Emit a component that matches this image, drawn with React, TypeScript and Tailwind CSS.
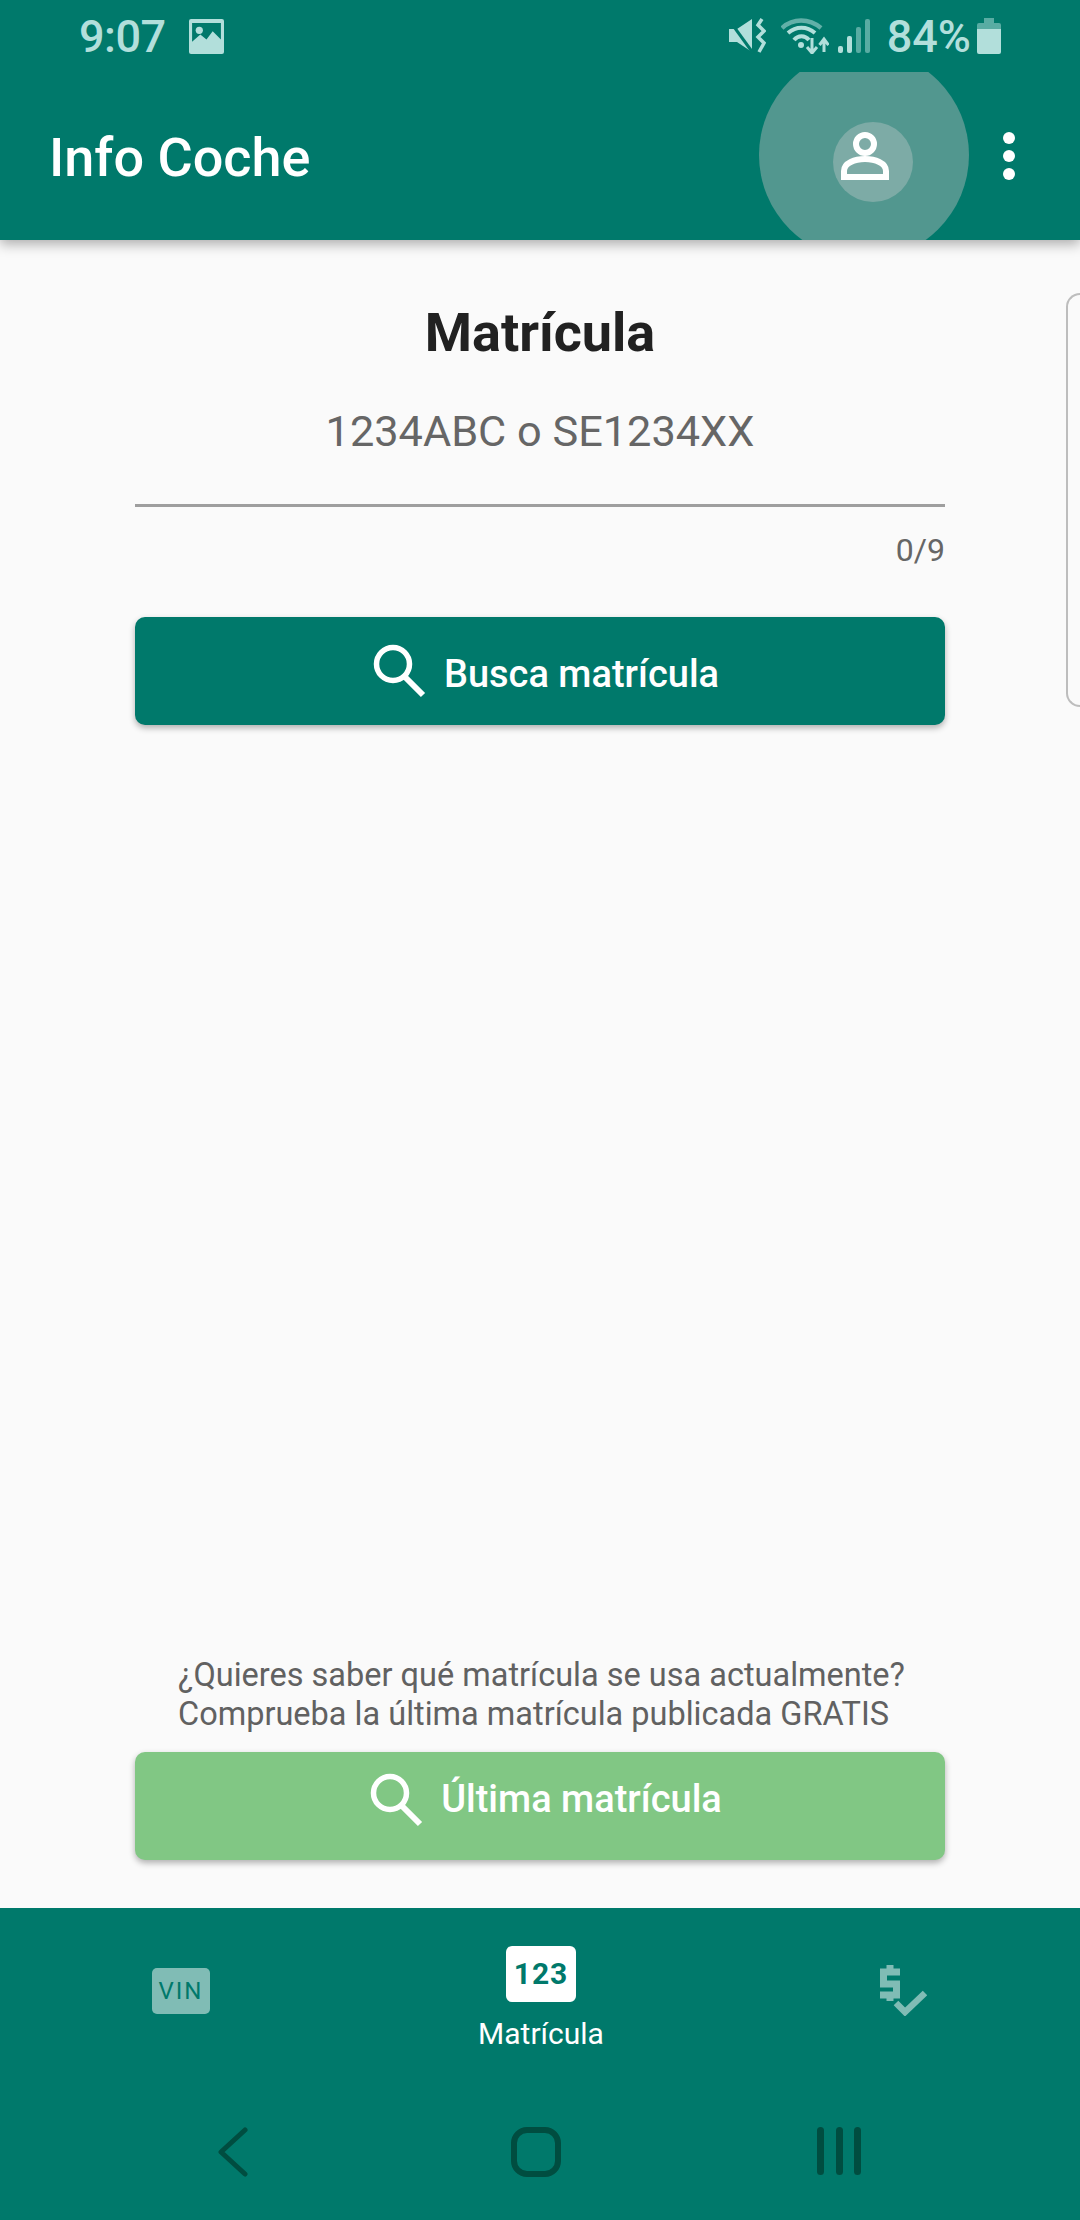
const roboto = "font-['Roboto',sans-serif]";

function SearchIcon() {
  return (
    <svg width="54" height="54" viewBox="0 0 54 54" fill="none" stroke="currentColor" className="shrink-0">
      <circle cx="20" cy="20" r="16.5" strokeWidth="5.5" />
      <path d="M31 32 L50 51" strokeWidth="6" />
    </svg>
  );
}

function ActionButton({ label, color, pad, labelPad }: { label: string; color: string; pad: string; labelPad: string }) {
  return (
    <button className={`flex h-[108px] w-full items-center justify-center gap-[17px] rounded-[10px] pl-[12px] text-[38px] font-medium text-white shadow-[0_3px_6px_rgba(0,0,0,0.3)] ${color} ${pad}`}>
      <SearchIcon />
      <span className={labelPad}>{label}</span>
    </button>
  );
}

function StatusBar() {
  return (
    <div className="flex h-[72px] items-center justify-between pl-[79px] pr-[79px] text-[#b2dfdb]">
      <div className="flex items-center gap-[23px]">
        <span className="text-[45px] font-medium leading-none tracking-[-0.5px]">9:07</span>
        <svg width="35" height="35" viewBox="0 0 34 34">
          <path fillRule="evenodd" fill="currentColor" d="M2 0h30a2 2 0 0 1 2 2v30a2 2 0 0 1-2 2H2a2 2 0 0 1-2-2V2a2 2 0 0 1 2-2Zm1 4v18l8-7 6 5 6-8 8 8V4H3Z" />
          <circle cx="10" cy="11" r="3.5" fill="currentColor" />
        </svg>
      </div>
      <div className="flex items-center">
        <svg width="37" height="36" viewBox="0 0 37 36" fill="currentColor">
          <path d="M0 11h8L23 1v33L8 24H0Z" />
          <path d="M0 2 L24 35" stroke="#00796b" strokeWidth="3" />
          <path d="M33 1 L29 7 L35 13 L29 19 L35 25 L30 34" fill="none" stroke="currentColor" strokeWidth="3.5" />
        </svg>
        <svg width="48" height="36" viewBox="0 0 48 36" fill="none" stroke="currentColor" className="ml-[15px]">
          <path d="M1 10 C12 0 28 0 40 10" strokeWidth="4.500" opacity="0.55" />
          <path d="M7 15 C15 8 26 8 34 15" strokeWidth="4" />
          <path d="M13 22 C17 17 24 17 28 22" strokeWidth="4" />
          <circle cx="20" cy="27" r="3" fill="currentColor" stroke="none" />
          <path d="M31 20 V34 M26 29 L31 35 L36 29 M43 34 V22 M38.500 27 L43 21 L47.500 27" strokeWidth="3" />
        </svg>
        <svg width="32" height="36" viewBox="0 0 32 36" className="ml-[9px]" fill="currentColor">
          <rect x="0" y="28" width="5" height="7" rx="2" />
          <rect x="9" y="18" width="5" height="17" rx="2" />
          <rect x="18" y="9" width="5" height="26" rx="2" opacity="0.5" />
          <rect x="27" y="1" width="5" height="34" rx="2" opacity="0.5" />
        </svg>
        <span className="ml-[17px] text-[45px] font-medium leading-none">84%</span>
        <svg width="24" height="36" viewBox="0 0 24 36" className="ml-[6px]" fill="currentColor">
          <path d="M7 0h10v5h5a2 2 0 0 1 2 2v4H0V7a2 2 0 0 1 2-2h5Z" opacity="0.5" />
          <path d="M0 11h24v23a2 2 0 0 1-2 2H2a2 2 0 0 1-2-2Z" />
        </svg>
      </div>
    </div>
  );
}

function Toolbar() {
  return (
    <div className="relative flex h-[168px] items-center justify-between overflow-hidden pl-[49px] pr-[65px]">
      {/* touch ripple behind the account button */}
      <div className="absolute left-[759px] top-[-22px] h-[210px] w-[210px] rounded-full bg-[#52978f]" />
      <div className="absolute left-[833px] top-[50px] h-[80px] w-[80px] rounded-full bg-[#7dabA6]" />
      <span className="pt-[3px] text-[54px] font-medium leading-none text-white">Info Coche</span>
      <div className="relative flex items-center gap-[114px]">
        <svg width="48" height="48" viewBox="0 0 48 48" fill="none" stroke="white" strokeWidth="6">
          <circle cx="24" cy="12" r="9" />
          <path d="M3 45 V39 C3 31 14 27 24 27 C34 27 45 31 45 39 V45 Z" />
        </svg>
        <svg width="12" height="48" viewBox="0 0 12 48" fill="white">
          <circle cx="6" cy="6" r="6" />
          <circle cx="6" cy="24" r="6" />
          <circle cx="6" cy="42" r="6" />
        </svg>
      </div>
    </div>
  );
}

function BottomNav() {
  return (
    <div className="flex h-[312px] flex-col bg-[#00796b]">
      <div className="flex h-[176px] items-start justify-between pl-[152px] pr-[153px]">
        <div className="mt-[60px] flex h-[46px] w-[58px] items-center justify-center rounded-[5px] bg-[#80bcb5] text-[24px] leading-none tracking-[2px] text-[#00796b]">
          VIN
        </div>
        <div className="mr-[8px] mt-[38px] flex flex-col items-center">
          <div className="flex h-[56px] w-[70px] items-center justify-center rounded-[6px] bg-white text-[30px] font-bold leading-none tracking-[1px] text-[#00796b]">
            123
          </div>
          <span className="mt-[15px] text-[30px] leading-[34px] text-white">Matrícula</span>
        </div>
        <svg width="47" height="52" viewBox="0 0 47 52" className="mt-[56px]" fill="none" stroke="#80bcb5">
          <path d="M20 8 H3.500 V20 H16.500 V31 H0" strokeWidth="7" />
          <path d="M10 1 V6 M10 33 V37" strokeWidth="7" />
          <path d="M16 39 L25 48 L45 29" strokeWidth="6.500" />
        </svg>
      </div>
      <div className="flex flex-1 items-start justify-between pl-[218px] pr-[219px] pt-[43px]">
        <svg width="30" height="50" viewBox="0 0 30 50" fill="none" stroke="#004d40" strokeWidth="5" strokeLinecap="round" strokeLinejoin="round">
          <path d="M27 3 L3 25 L27 47" />
        </svg>
        <div className="ml-[6px] h-[50px] w-[50px] rounded-[16px] border-[6px] border-[#004d40]" />
        <div className="flex h-[48px] w-[44px] justify-between">
          <div className="h-full w-[7px] rounded-full bg-[#004d40]" />
          <div className="h-full w-[7px] rounded-full bg-[#004d40]" />
          <div className="h-full w-[7px] rounded-full bg-[#004d40]" />
        </div>
      </div>
    </div>
  );
}

export default function App() {
  return (
    <div className={`flex h-[2220px] w-[1080px] flex-col overflow-hidden bg-[#fafafa] ${roboto}`}>
      <div className="relative z-10 bg-[#00796b] shadow-[0_4px_12px_rgba(0,0,0,0.32)]">
        <StatusBar />
        <Toolbar />
      </div>

      <div className="relative flex flex-1 flex-col px-[135px]">
        {/* edge panel handle */}
        <div className="absolute right-0 top-[53px] h-[414px] w-[14px] rounded-l-[14px] border-y-2 border-l-2 border-[#bdbdbd]" />

        <h1 className="mt-[60px] text-center text-[54px] font-bold leading-[66px] text-[#212121]">Matrícula</h1>
        <div className="mt-[41px] text-center text-[43.300px] leading-[50px] text-[#666666]">1234ABC o SE1234XX</div>
        <div className="mt-[47px] h-[3px] bg-[#9e9e9e]" />
        <div className="mt-[24px] text-right text-[32px] leading-[38px] text-[#666666]">0/9</div>
        <div className="mt-[48px]">
          <ActionButton label="Busca matrícula" color="bg-[#00796b]" pad="" labelPad="pt-[7px]" />
        </div>

        <div className="mt-auto whitespace-nowrap px-[43px] text-[32.500px] leading-[39px] text-[#616161]">
          <p>¿Quieres saber qué matrícula se usa actualmente?</p>
          <p>Comprueba la última matrícula publicada GRATIS</p>
        </div>
        <div className="mb-[48px] mt-[18px]">
          <ActionButton label="Última matrícula" color="bg-[#81c784]" pad="pb-[13px]" labelPad="" />
        </div>
      </div>

      <BottomNav />
    </div>
  );
}
